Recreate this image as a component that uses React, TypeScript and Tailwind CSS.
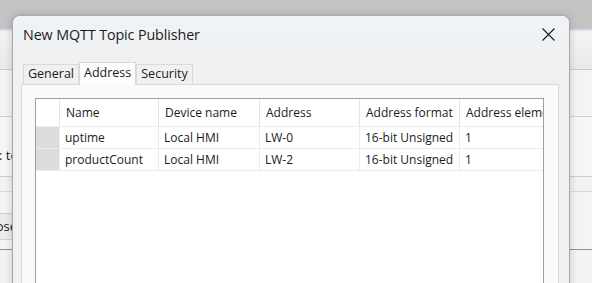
import React from 'react';

const columns = [
  { label: 'Name', w: 'w-[99px]' },
  { label: 'Device name', w: 'w-[101px]' },
  { label: 'Address', w: 'w-[100px]' },
  { label: 'Address format', w: 'w-[100px]' },
  { label: 'Address elements', w: 'w-[110px]' },
];

const rows = [
  ['uptime', 'Local HMI', 'LW-0', '16-bit Unsigned', '1'],
  ['productCount', 'Local HMI', 'LW-2', '16-bit Unsigned', '1'],
];

function CloseIcon() {
  return (
    <svg width="13" height="13" viewBox="0 0 13 13" className="text-[#1a1a1a]">
      <path d="M0.5 0.5 L12.5 12.5 M12.5 0.5 L0.5 12.5" stroke="currentColor" strokeWidth="1.1" fill="none" />
    </svg>
  );
}

export default function App() {
  return (
    <div className="relative w-[592px] h-[283px] overflow-hidden bg-[#f3f3f3] font-['Open_Sans',sans-serif] text-[#1b1b1b]">
      {/* window behind the dialog */}
      <div className="flex flex-col w-full">
        <div className="h-[29px] bg-[#c4c4c4]" />
        <div className="h-[2px] bg-[#dcd8ec]" />
        <div className="h-[39px] bg-gradient-to-b from-[#f4f4f4] to-[#e9e9e9] border-b border-[#c8c8c8]" />
        <div className="h-[47px] bg-[#f4f4f4] border-b border-[#cfcfcf]" />
        <div className="h-[60px] bg-[#f6f6f6] border-b border-[#cfcfcf] flex items-start">
          <span className="mt-[29px] ml-[-1px] text-[13px] whitespace-nowrap">: test</span>
        </div>
        <div className="h-[15px] bg-[#f2f2f2] border-b border-[#dadada]" />
        <div className="h-[58px] bg-[#f4f4f4] border-b border-[#8f8f8f] flex items-start">
          <div className="mt-[21px] h-[27px] w-[40px] ml-[-21px] border border-[#d0d0d0] bg-[#ececec] flex items-center justify-end pr-[1px] text-[13px]">
            Close
          </div>
        </div>
        <div className="flex-1 bg-[#f1f1f1]" />
      </div>

      {/* dialog */}
      <div className="absolute left-[12px] top-[15px] w-[558px] h-[300px] rounded-t-[8px] border border-[#a9a9a9] bg-[#f0f0f0] shadow-[0_0_8px_rgba(0,0,0,0.18)] overflow-hidden">
        <div className="h-[45px] bg-gradient-to-b from-[#eef3f8] to-[#f0f0f0] flex items-start justify-between pl-[10px] pr-[14px]">
          <span className="mt-[8px] text-[14.3px] tracking-[-0.1px]">New MQTT Topic Publisher</span>
          <span className="mt-[12px]"><CloseIcon /></span>
        </div>

        <div className="ml-[10px] flex items-end h-[23px] text-[12.5px]">
          <div className="h-[20px] px-[4px] border border-b-0 border-[#d9d9d9] bg-[#f0f0f0] flex items-center">General</div>
          <div className="h-[23px] px-[4px] border border-b-0 border-[#d9d9d9] bg-[#fcfcfc] flex items-start pt-[1px] relative z-10 -mb-px">Address</div>
          <div className="h-[20px] px-[4px] border border-b-0 border-[#d9d9d9] bg-[#f0f0f0] flex items-center">Security</div>
        </div>

        <div className="ml-[8px] w-[538px] h-[220px] border border-[#dadada] bg-[#f9f9f9] pt-[13px] pl-[13px]">
          <div className="w-[509px] h-[200px] border border-[#a0a0a0] bg-white overflow-hidden text-[12px]">
            <div className="flex h-[28px] border-b border-[#ececec]">
              <div className="w-[23px] shrink-0" />
              {columns.map((c) => (
                <div key={c.label} className={`${c.w} shrink-0 border-l border-[#e4e4e4] flex items-center pl-[6px] pt-[1px] whitespace-nowrap overflow-hidden`}>
                  {c.label}
                </div>
              ))}
            </div>
            {rows.map((r, i) => (
              <div key={i} className="flex h-[22px] border-b border-[#ececec]">
                <div className="w-[23px] shrink-0 bg-[#dcdcdc]" />
                {r.map((v, j) => (
                  <div key={j} className={`${columns[j].w} shrink-0 border-l border-[#ececec] flex items-center pl-[5px] whitespace-nowrap`}>
                    {v}
                  </div>
                ))}
              </div>
            ))}
          </div>
        </div>
      </div>
    </div>
  );
}
